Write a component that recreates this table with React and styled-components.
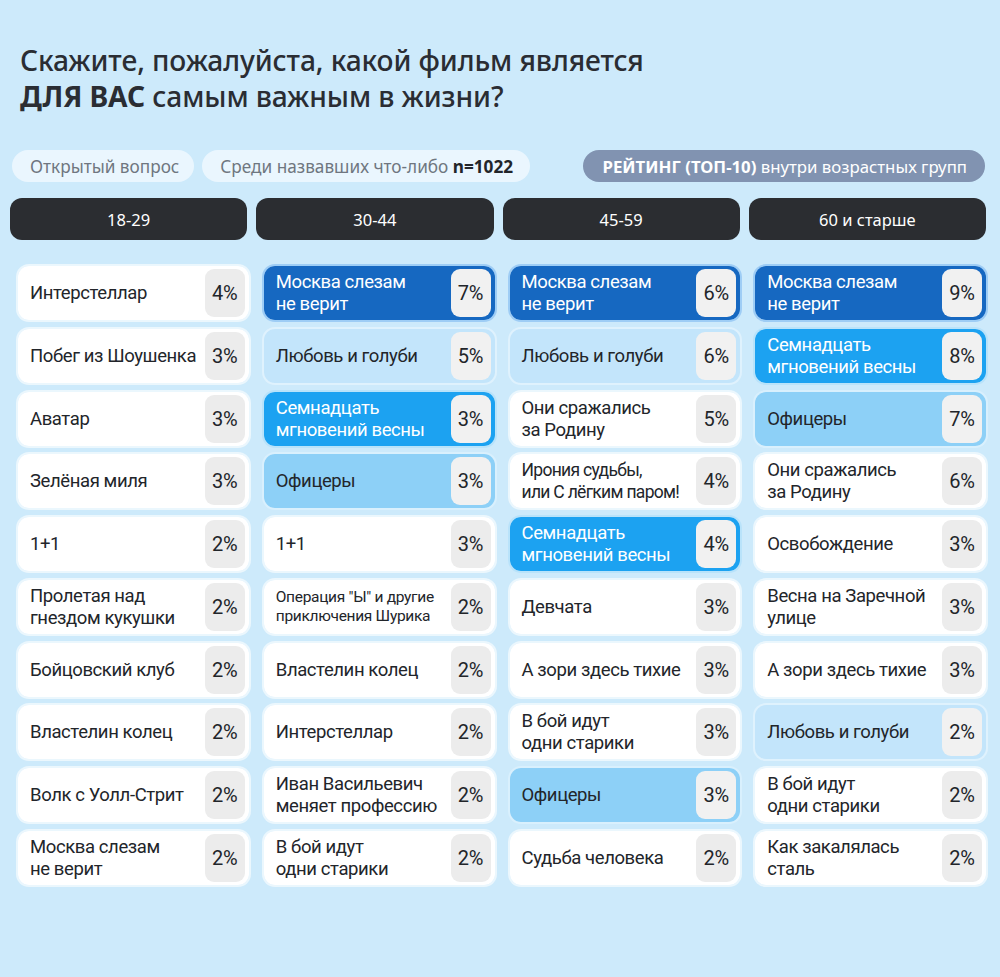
import React from "react";
import styled, { createGlobalStyle } from "styled-components";

const Global = createGlobalStyle`
  html, body { margin: 0; padding: 0; background: #cdeafb; }
  body { font-family: "Noto Sans", "Open Sans", sans-serif; color: #22252a; }
`;

const Page = styled.div`
  width: 1000px;
  height: 977px;
  background: #cdeafb;
  box-sizing: border-box;
  padding-top: 42px;
  overflow: hidden;
`;

const Title = styled.h1`
  margin: 0 0 0 20px;
  font-size: 28.2px;
  line-height: 36px;
  font-weight: 500;
  color: #2a2d33;
  letter-spacing: -0.1px;
  b { font-weight: 700; }
`;

const PillRow = styled.div`
  display: flex;
  align-items: center;
  gap: 8px;
  margin: 36px 15px 0 12px;
`;

const Pill = styled.div`
  height: 32px;
  display: flex;
  align-items: center;
  padding: 0 ${(p) => p.$pr || 17}px 0 ${(p) => p.$pl || 18}px;
  border-radius: 16px;
  font-size: ${(p) => (p.$accent ? "16.8px" : "17.2px")};
  background: ${(p) => (p.$accent ? "#8193b1" : "#eaf6fe")};
  color: ${(p) => (p.$accent ? "#ffffff" : "#6f7680")};
  margin-left: ${(p) => (p.$push ? "auto" : "0")};
  white-space: pre;
  b { font-weight: 700; color: ${(p) => (p.$accent ? "#ffffff" : "#22252a")}; }
`;

const HeaderGrid = styled.div`
  display: grid;
  grid-template-columns: repeat(4, 1fr);
  gap: 9px;
  margin: 16px 14px 0 10px;
`;

const Header = styled.div`
  height: 42px;
  border-radius: 12px;
  background: #2b2d31;
  color: #ffffff;
  font-size: 16.5px;
  display: flex;
  align-items: center;
  justify-content: center;
`;

const Columns = styled.div`
  display: grid;
  grid-template-columns: repeat(4, 1fr);
  gap: 11px;
  margin: 24px 12px 0 16px;
`;

const Column = styled.div`
  display: flex;
  flex-direction: column;
  gap: 4.75px;
`;

const tones = {
  white: { bg: "#ffffff", fg: "#22252a", rim: "rgba(255,255,255,0.6)" },
  dark: { bg: "#1668c1", fg: "#ffffff", rim: "rgba(120,180,240,0.55)" },
  bright: { bg: "#1ca2f1", fg: "#ffffff", rim: "rgba(170,220,250,0.55)" },
  light: { bg: "#8dd0f7", fg: "#22252a", rim: "rgba(230,245,255,0.5)" },
  pale: { bg: "#c3e5fb", fg: "#22252a", rim: "rgba(235,247,255,0.6)" },
};

const Cell = styled.div`
  height: 58px;
  box-sizing: border-box;
  border-radius: 13px;
  border: 2px solid ${(p) => tones[p.$tone].rim};
  background: ${(p) => tones[p.$tone].bg};
  background-clip: padding-box;
  color: ${(p) => tones[p.$tone].fg};
  display: flex;
  align-items: center;
  padding: 0 4px 0 12px;
  gap: 4px;
  font-family: Roboto, "Noto Sans", sans-serif;
`;

const sizes = {
  normal: { fs: "18.5px", lh: "22px", ls: "-0.4px" },
  tight: { fs: "17.5px", lh: "22px", ls: "-0.7px" },
  small: { fs: "15.5px", lh: "19px", ls: "-0.3px" },
};

const Name = styled.div`
  flex: 1;
  min-width: 0;
  font-size: ${(p) => sizes[p.$size].fs};
  line-height: ${(p) => sizes[p.$size].lh};
  letter-spacing: ${(p) => sizes[p.$size].ls};
  white-space: pre;
`;

const Pct = styled.div`
  width: 40px;
  height: 48px;
  flex: none;
  border-radius: 9px;
  background: ${(p) => (p.$tone === "white" ? "#ececec" : "#f1f1f1")};
  color: #22252a;
  font-size: 20px;
  letter-spacing: -0.3px;
  display: flex;
  align-items: center;
  justify-content: center;
`;

const groups = ["18-29", "30-44", "45-59", "60 и старше"];

const data = [
  [
    ["Интерстеллар", 4],
    ["Побег из Шоушенка", 3],
    ["Аватар", 3],
    ["Зелёная миля", 3],
    ["1+1", 2],
    ["Пролетая над\nгнездом кукушки", 2],
    ["Бойцовский клуб", 2],
    ["Властелин колец", 2],
    ["Волк с Уолл-Стрит", 2],
    ["Москва слезам\nне верит", 2],
  ],
  [
    ["Москва слезам\nне верит", 7, "dark"],
    ["Любовь и голуби", 5, "pale"],
    ["Семнадцать\nмгновений весны", 3, "bright"],
    ["Офицеры", 3, "light"],
    ["1+1", 3],
    ["Операция \"Ы\" и другие\nприключения Шурика", 2, "white", "small"],
    ["Властелин колец", 2],
    ["Интерстеллар", 2],
    ["Иван Васильевич\nменяет профессию", 2],
    ["В бой идут\nодни старики", 2],
  ],
  [
    ["Москва слезам\nне верит", 6, "dark"],
    ["Любовь и голуби", 6, "pale"],
    ["Они сражались\nза Родину", 5],
    ["Ирония судьбы,\nили С лёгким паром!", 4, "white", "tight"],
    ["Семнадцать\nмгновений весны", 4, "bright"],
    ["Девчата", 3],
    ["А зори здесь тихие", 3],
    ["В бой идут\nодни старики", 3],
    ["Офицеры", 3, "light"],
    ["Судьба человека", 2],
  ],
  [
    ["Москва слезам\nне верит", 9, "dark"],
    ["Семнадцать\nмгновений весны", 8, "bright"],
    ["Офицеры", 7, "light"],
    ["Они сражались\nза Родину", 6],
    ["Освобождение", 3],
    ["Весна на Заречной\nулице", 3],
    ["А зори здесь тихие", 3],
    ["Любовь и голуби", 2, "pale"],
    ["В бой идут\nодни старики", 2],
    ["Как закалялась\nсталь", 2],
  ],
];

export default function App() {
  return (
    <Page>
      <Global />
      <Title>
        Скажите, пожалуйста, какой фильм является
        <br />
        <b>ДЛЯ ВАС</b> самым важным в жизни?
      </Title>
      <PillRow>
        <Pill $pr={15}>Открытый вопрос</Pill>
        <Pill>
          Среди назвавших что-либо <b>n=1022</b>
        </Pill>
        <Pill $accent $push $pl={19} $pr={18}>
          <b>РЕЙТИНГ (ТОП-10)</b> внутри возрастных групп
        </Pill>
      </PillRow>
      <HeaderGrid>
        {groups.map((g) => (
          <Header key={g}>{g}</Header>
        ))}
      </HeaderGrid>
      <Columns>
        {data.map((col, ci) => (
          <Column key={ci}>
            {col.map(([name, pct, tone = "white", size = "normal"], ri) => (
              <Cell key={ri} $tone={tone}>
                <Name $size={size}>{name}</Name>
                <Pct $tone={tone}>{pct}%</Pct>
              </Cell>
            ))}
          </Column>
        ))}
      </Columns>
    </Page>
  );
}
